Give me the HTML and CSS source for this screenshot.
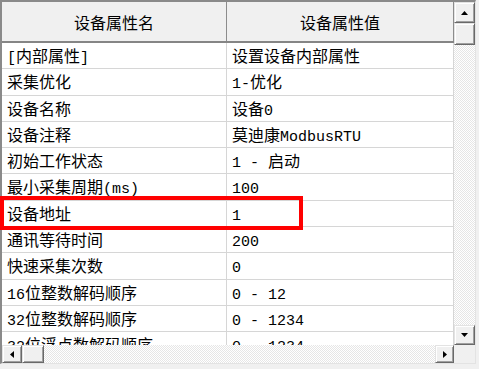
FILE: index.html
```html
<!DOCTYPE html>
<html lang="zh-CN">
<head>
<meta charset="utf-8">
<title>设备属性</title>
<link rel="stylesheet" href="styles.css">
</head>
<body>
<div class="frame">
  <div class="table">
    <div class="head">
      <div class="hcell">设备属性名</div>
      <div class="hcell">设备属性值</div>
    </div>
    <div class="rows">
      <div class="row"><div class="cell"><span class="en">[</span>内部属性<span class="en">]</span></div><div class="cell">设置设备内部属性</div></div>
      <div class="row"><div class="cell">采集优化</div><div class="cell"><span class="en">1-</span>优化</div></div>
      <div class="row"><div class="cell">设备名称</div><div class="cell">设备<span class="en">0</span></div></div>
      <div class="row"><div class="cell">设备注释</div><div class="cell">莫迪康<span class="en">ModbusRTU</span></div></div>
      <div class="row"><div class="cell">初始工作状态</div><div class="cell"><span class="en">1 - </span>启动</div></div>
      <div class="row"><div class="cell">最小采集周期<span class="en">(ms)</span></div><div class="cell"><span class="en">100</span></div></div>
      <div class="row"><div class="cell">设备地址</div><div class="cell"><span class="en">1</span></div></div>
      <div class="row"><div class="cell">通讯等待时间</div><div class="cell"><span class="en">200</span></div></div>
      <div class="row"><div class="cell">快速采集次数</div><div class="cell"><span class="en">0</span></div></div>
      <div class="row"><div class="cell"><span class="en">16</span>位整数解码顺序</div><div class="cell"><span class="en">0 - 12</span></div></div>
      <div class="row"><div class="cell"><span class="en">32</span>位整数解码顺序</div><div class="cell"><span class="en">0 - 1234</span></div></div>
      <div class="row"><div class="cell"><span class="en">32</span>位浮点数解码顺序</div><div class="cell"><span class="en">0 - 1234</span></div></div>
    </div>
  </div>
  <div class="vscroll">
    <div class="btn btn-up"><svg width="7" height="4" viewBox="0 0 7 4"><polygon points="3.5,0 7,4 0,4" fill="#000"/></svg></div>
    <div class="thumb"></div>
    <div class="track"></div>
    <div class="btn btn-down"><svg width="7" height="4" viewBox="0 0 7 4"><polygon points="0,0 7,0 3.5,4" fill="#000"/></svg></div>
  </div>
  <div class="hscroll">
    <div class="btn btn-left"><svg width="4" height="7" viewBox="0 0 4 7"><polygon points="0,3.5 4,0 4,7" fill="#000"/></svg></div>
    <div class="thumb"></div>
    <div class="track"></div>
    <div class="btn btn-right"><svg width="4" height="7" viewBox="0 0 4 7"><polygon points="0,0 4,3.5 0,7" fill="#000"/></svg></div>
  </div>
  <div class="corner"></div>
  <div class="highlight"></div>
</div>
</body>
</html>
```
FILE: styles.css
```css
html, body {
  margin: 0;
  padding: 0;
  background: #f0f0f0;
}

body {
  width: 479px;
  height: 369px;
  overflow: hidden;
  font-family: "Noto Sans CJK SC", sans-serif;
  color: #000;
}

.frame {
  position: relative;
  display: grid;
  grid-template-columns: 452px 21px;
  grid-template-rows: 343px 18px;
  width: max-content;
  border-top: 2px solid #8a8a8a;
  border-left: 2px solid #8a8a8a;
  border-right: 1px solid #e3e3e3;
  border-bottom: 1px solid #e3e3e3;
  background: #f0f0f0;
}

.table {
  display: flex;
  flex-direction: column;
  overflow: hidden;
  background: #fff;
}

.head {
  display: grid;
  grid-template-columns: 225px 227px;
  height: 41px;
  flex: none;
  box-sizing: border-box;
  border-bottom: 2px solid #858585;
  background: #f0f0f0;
}

.hcell {
  display: flex;
  align-items: center;
  justify-content: center;
  font-size: 16px;
  border-right: 1px solid #8c8c8c;
}

.rows {
  display: flex;
  flex-direction: column;
}

.row {
  display: grid;
  grid-template-columns: 225px 227px;
  height: 26.3px;
  flex: none;
  box-sizing: border-box;
  border-bottom: 1px solid #d6d6d6;
}

.cell {
  display: block;
  padding-left: 5px;
  font-size: 16px;
  line-height: 25px;
  white-space: nowrap;
  overflow: hidden;
  border-right: 1px solid #d6d6d6;
}

.en {
  font-family: "Liberation Mono", monospace;
  font-size: 15px;
  white-space: pre;
}

.vscroll {
  display: flex;
  flex-direction: column;
}

.hscroll {
  display: flex;
}

.btn {
  display: flex;
  align-items: center;
  justify-content: center;
  box-sizing: border-box;
  background: #f0f0f0;
  border-top: 1px solid #e3e3e3;
  border-left: 1px solid #e3e3e3;
  border-right: 1px solid #696969;
  border-bottom: 1px solid #696969;
  box-shadow: inset 1px 1px 0 #fff, inset -1px -1px 0 #a0a0a0;
  flex: none;
}

.thumb {
  box-sizing: border-box;
  background: #f0f0f0;
  border-top: 1px solid #e3e3e3;
  border-left: 1px solid #e3e3e3;
  border-right: 1px solid #696969;
  border-bottom: 1px solid #696969;
  box-shadow: inset 1px 1px 0 #fff, inset -1px -1px 0 #a0a0a0;
  flex: none;
}

.track {
  flex: 1;
  background: repeating-conic-gradient(#e6e6e6 0 25%, #ffffff 0 50%) 0 0 / 2px 2px;
}

.vscroll .btn-up { height: 21px; }
.vscroll .thumb { height: 22px; }
.vscroll .btn-down { height: 20px; }

.hscroll .btn-left { width: 20px; }
.hscroll .thumb { width: 22px; }
.hscroll .btn-right { width: 19px; }

.corner {
  background: #f0f0f0;
}

.highlight {
  position: absolute;
  left: -2px;
  top: 194px;
  width: 303px;
  height: 34px;
  box-sizing: border-box;
  border: 4px solid #ff0000;
  pointer-events: none;
}
```
